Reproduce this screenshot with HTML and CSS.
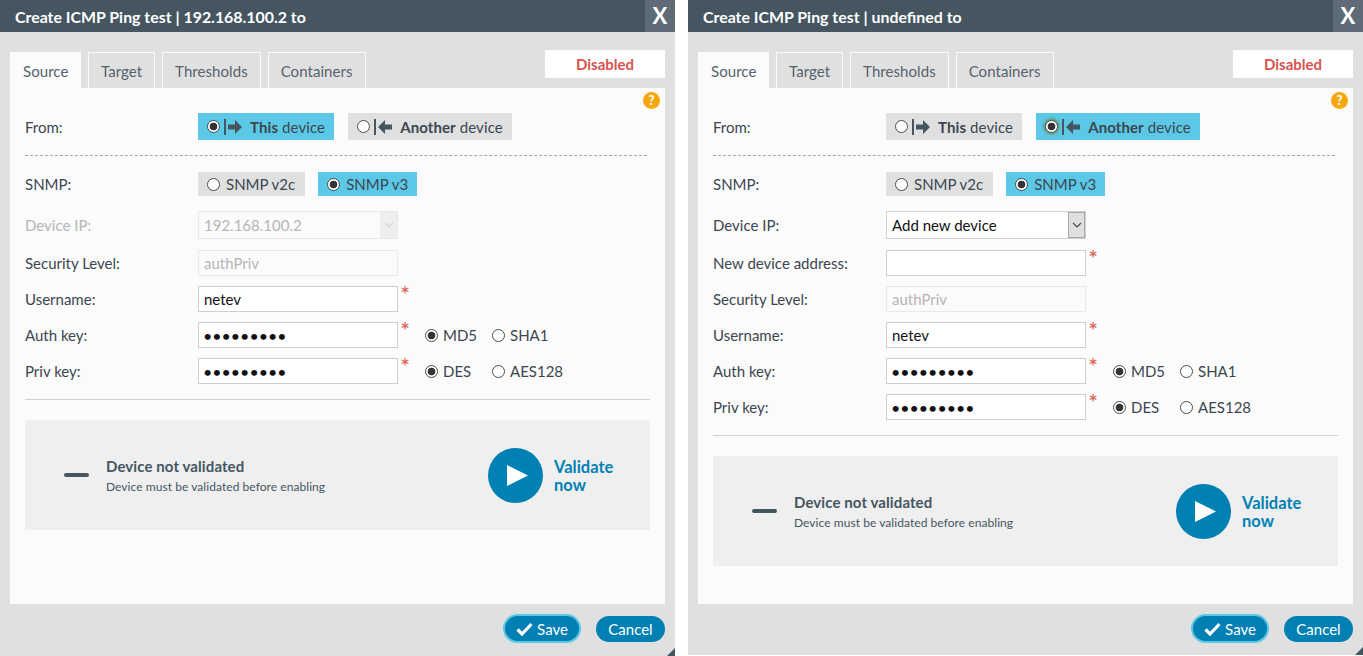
FILE: index.html
```html
<!DOCTYPE html>
<html lang="en">
<head>
<meta charset="utf-8">
<title>Create ICMP Ping test</title>
<link rel="stylesheet" href="styles.css">
</head>
<body>
<div class="desk">

<section class="dialog">
  <header class="title"><span class="title-text">Create ICMP Ping test | 192.168.100.2 to</span><span class="close">X</span></header>
  <div class="tabbar">
    <span class="tab tab-active">Source</span><span class="tab">Target</span><span class="tab">Thresholds</span><span class="tab">Containers</span>
    <span class="state">Disabled</span>
  </div>
  <div class="panel">
    <span class="help">?</span>
    <div class="row row-from">
      <label class="lbl">From:</label>
      <span class="toggle toggle-big on"><input class="radio" type="radio" checked>
        <svg class="dir" width="20" height="16" viewBox="0 0 20 16"><rect x="0" y="0" width="2" height="16" fill="#455661"/><path d="M4 5.500h7V1l7 7-7 7v-4.500H4z" fill="#455661"/></svg>
        <span class="toggle-text"><b>This</b> device</span></span>
      <span class="toggle toggle-big"><input class="radio" type="radio">
        <svg class="dir" width="20" height="16" viewBox="0 0 20 16"><rect x="0" y="0" width="2" height="16" fill="#455661"/><path d="M18 5.500h-7V1L4 8l7 7v-4.500h7z" fill="#455661"/></svg>
        <span class="toggle-text"><b>Another</b> device</span></span>
    </div>
    <div class="dashed"></div>
    <div class="row row-snmp">
      <label class="lbl">SNMP:</label>
      <span class="toggle"><input class="radio" type="radio">SNMP v2c</span>
      <span class="toggle on"><input class="radio" type="radio" checked>SNMP v3</span>
    </div>
    <div class="row row-select">
      <label class="lbl off">Device IP:</label>
      <span class="selectbox selectbox-off"><select class="select" disabled><option>192.168.100.2</option></select><span class="arrow"><svg width="10" height="6" viewBox="0 0 10 6"><path d="M1 1l4 4 4-4" fill="none" stroke="#d5d5d5" stroke-width="1.200"/></svg></span></span>
    </div>
    <div class="row row-field">
      <label class="lbl">Security Level:</label>
      <input class="field" type="text" value="authPriv" disabled>
    </div>
    <div class="row row-field">
      <label class="lbl">Username:</label>
      <input class="field" type="text" value="netev"><span class="star">*</span>
    </div>
    <div class="row row-field">
      <label class="lbl">Auth key:</label>
      <input class="field" type="password" value="xxxxxxxxx"><span class="star">*</span>
      <span class="opt"><input class="radio" type="radio" checked>MD5</span><span class="opt"><input class="radio" type="radio">SHA1</span>
    </div>
    <div class="row row-field">
      <label class="lbl">Priv key:</label>
      <input class="field" type="password" value="xxxxxxxxx"><span class="star">*</span>
      <span class="opt"><input class="radio" type="radio" checked>DES</span><span class="opt"><input class="radio" type="radio">AES128</span>
    </div>
    <div class="rule"></div>
    <div class="validate">
      <span class="dash"></span>
      <div class="vtext"><div class="vtitle">Device not validated</div><div class="vsub">Device must be validated before enabling</div></div>
      <span class="play"><svg width="21" height="21" viewBox="0 0 21 21"><path d="M0 0l21 10.500L0 21z" fill="#fff"/></svg></span>
      <span class="vlink">Validate<br>now</span>
    </div>
  </div>
  <footer class="foot">
    <button class="btn btn-save"><svg width="17" height="14" viewBox="0 0 17 14"><path d="M1.500 7.500l4.500 4.500 9.500-10" fill="none" stroke="#fff" stroke-width="3.200"/></svg>Save</button>
    <button class="btn btn-cancel">Cancel</button>
  </footer>
  <span class="grip"></span>
</section>

<section class="dialog dialog-second">
  <header class="title"><span class="title-text">Create ICMP Ping test | undefined to</span><span class="close">X</span></header>
  <div class="tabbar">
    <span class="tab tab-active">Source</span><span class="tab">Target</span><span class="tab">Thresholds</span><span class="tab">Containers</span>
    <span class="state">Disabled</span>
  </div>
  <div class="panel">
    <span class="help">?</span>
    <div class="row row-from">
      <label class="lbl">From:</label>
      <span class="toggle toggle-big"><input class="radio" type="radio">
        <svg class="dir" width="20" height="16" viewBox="0 0 20 16"><rect x="0" y="0" width="2" height="16" fill="#455661"/><path d="M4 5.500h7V1l7 7-7 7v-4.500H4z" fill="#455661"/></svg>
        <span class="toggle-text"><b>This</b> device</span></span>
      <span class="toggle toggle-big on"><input class="radio radio-focus" type="radio" checked>
        <svg class="dir" width="20" height="16" viewBox="0 0 20 16"><rect x="0" y="0" width="2" height="16" fill="#455661"/><path d="M18 5.500h-7V1L4 8l7 7v-4.500h7z" fill="#455661"/></svg>
        <span class="toggle-text"><b>Another</b> device</span></span>
    </div>
    <div class="dashed"></div>
    <div class="row row-snmp">
      <label class="lbl">SNMP:</label>
      <span class="toggle"><input class="radio" type="radio">SNMP v2c</span>
      <span class="toggle on"><input class="radio" type="radio" checked>SNMP v3</span>
    </div>
    <div class="row row-select">
      <label class="lbl">Device IP:</label>
      <span class="selectbox"><select class="select"><option>Add new device</option></select><span class="arrow"><svg width="10" height="6" viewBox="0 0 10 6"><path d="M1 1l4 4 4-4" fill="none" stroke="#444" stroke-width="1.200"/></svg></span></span>
    </div>
    <div class="row row-field">
      <label class="lbl">New device address:</label>
      <input class="field" type="text"><span class="star">*</span>
    </div>
    <div class="row row-field">
      <label class="lbl">Security Level:</label>
      <input class="field" type="text" value="authPriv" disabled>
    </div>
    <div class="row row-field">
      <label class="lbl">Username:</label>
      <input class="field" type="text" value="netev"><span class="star">*</span>
    </div>
    <div class="row row-field">
      <label class="lbl">Auth key:</label>
      <input class="field" type="password" value="xxxxxxxxx"><span class="star">*</span>
      <span class="opt"><input class="radio" type="radio" checked>MD5</span><span class="opt"><input class="radio" type="radio">SHA1</span>
    </div>
    <div class="row row-field">
      <label class="lbl">Priv key:</label>
      <input class="field" type="password" value="xxxxxxxxx"><span class="star">*</span>
      <span class="opt"><input class="radio" type="radio" checked>DES</span><span class="opt"><input class="radio" type="radio">AES128</span>
    </div>
    <div class="rule"></div>
    <div class="validate">
      <span class="dash"></span>
      <div class="vtext"><div class="vtitle">Device not validated</div><div class="vsub">Device must be validated before enabling</div></div>
      <span class="play"><svg width="21" height="21" viewBox="0 0 21 21"><path d="M0 0l21 10.500L0 21z" fill="#fff"/></svg></span>
      <span class="vlink">Validate<br>now</span>
    </div>
  </div>
  <footer class="foot">
    <button class="btn btn-save"><svg width="17" height="14" viewBox="0 0 17 14"><path d="M1.500 7.500l4.500 4.500 9.500-10" fill="none" stroke="#fff" stroke-width="3.200"/></svg>Save</button>
    <button class="btn btn-cancel">Cancel</button>
  </footer>
  <span class="grip"></span>
</section>

</div>
</body>
</html>
```
FILE: styles.css
```css
* { box-sizing: border-box; }
html, body { margin: 0; background: #fff; }
body { font: 15px/20px Lato, "Open Sans", sans-serif; color: #3b4650; overflow: hidden; }
.desk { display: flex; align-items: flex-start; gap: 13px; width: 1363px; height: 656px; overflow: hidden; }
.dialog { position: relative; width: 675px; height: 656px; flex: none; display: flex; flex-direction: column; background: #e0e0e0; }
.dialog-second { height: 655px; }

.title { height: 32px; flex: none; display: flex; justify-content: space-between; background: #455661; color: #fff; }
.title-text { padding: 7px 0 0 15px; font-weight: 700; font-size: 15.900px; line-height: 20px; }
.close { width: 30px; text-align: center; background: #5f6b77; font-weight: 700; font-size: 22px; line-height: 32px; }

.tabbar { height: 56px; flex: none; margin: 0 10px; display: flex; align-items: flex-end; gap: 7px; }
.tab { height: 36px; padding: 7px 12px 0; border: 1px solid #fbfbfb; border-bottom: 0; color: #56626c; line-height: 22px; letter-spacing: .06px; }
.tab-active { padding-right: 11.500px; background: #fbfbfb; border-color: #fbfbfb; }
.state { align-self: flex-start; margin: 18px 0 0 auto; width: 120px; height: 28px; background: #fff; color: #d9534f; font-weight: 700; text-align: center; line-height: 28px; }

.panel { position: relative; height: 516px; flex: none; margin: 0 10px; padding: 0 15px; background: #fbfbfb; }
.help { position: absolute; top: 4px; right: 5px; width: 17px; height: 17px; border-radius: 50%; background: #f5a70c; color: #fff; font-weight: 900; font-size: 13px; line-height: 17px; text-align: center; }

.row { display: flex; align-items: center; }
.lbl { width: 173px; flex: none; color: #3b4650; }
.lbl.off { color: #b5b5b5; }
.row-from { margin-top: 25px; height: 27px; gap: 0; }
.row-snmp { margin-top: 16px; height: 24px; }
.row-select { margin-top: 15px; height: 28px; }
.row-field { margin-top: 10px; height: 26px; }
.row-select + .row-field { margin-top: 11px; }

.toggle { display: inline-flex; align-items: center; height: 100%; padding: 0 9px; background: #e0e0e0; color: #3b4650; margin-right: 13px; }
.row-snmp .lbl + .toggle { padding-right: 10px; }
.toggle.on { background: #5bc8e5; }
.toggle-big { margin-right: 14px; }
.toggle b { font-weight: 700; }
.dir { margin: 0 0 0 4px; flex: none; }
.toggle-text { margin-left: 6px; letter-spacing: .1px; }

.radio { appearance: none; -webkit-appearance: none; width: 13px; height: 13px; margin: 0 6px 0 0; flex: none; border: 1px solid #4b4b4b; border-radius: 50%; background: #fff; }
.radio:checked { background: radial-gradient(circle, #333 0 3.500px, #fff 4.200px); }
.toggle-big .radio { margin-right: 0; }
.radio-focus { box-shadow: 0 0 3px 1px #6f7a3a; }

.dashed { width: 622px; margin-top: 15px; border-top: 1px dashed #a8a8a8; }
.rule { width: 625px; margin-top: 15px; border-top: 1px solid #cfcfcf; }

.field { width: 200px; height: 100%; flex: none; padding: 0 5px; border: 1px solid #cfcfcf; background: #fff; color: #111; font: 15px Lato, sans-serif; outline: 0; }
.field:disabled { border-color: #e8e8e8; background: #fbfbfb; color: #b5b5b5; }
.field[type=password] { padding-left: 4px; font-size: 16px; }
.star { width: 27px; flex: none; align-self: flex-start; margin-top: -2px; padding-left: 2px; color: #e05a50; font-size: 24px; line-height: 20px; }
.opt { width: 67px; flex: none; display: inline-flex; align-items: center; }
.opt .radio { margin-right: 5px; }

.selectbox { position: relative; width: 200px; height: 100%; flex: none; }
.select { appearance: none; -webkit-appearance: none; display: block; width: 100%; height: 100%; padding: 0 5px; border: 1px solid #cfcfcf; border-radius: 0; background: #fff; color: #111; font: 15px Lato, sans-serif; }
.selectbox-off .select { border-color: #e8e8e8; background: #fbfbfb; color: #b5b5b5; opacity: 1; }
.arrow { position: absolute; top: 1px; right: 1px; bottom: 1px; width: 17px; display: flex; align-items: center; justify-content: center; background: #dfdfdf; border: 1px solid #a8a8a8; }
.selectbox-off .arrow { background: #eeeeee; border-color: #eeeeee; }

.validate { width: 625px; height: 110px; margin-top: 20px; display: flex; align-items: center; background: #efefef; }
.dash { width: 25px; height: 4px; margin-left: 39px; border-radius: 2px; background: #455661; flex: none; }
.vtext { width: 382px; margin-left: 17px; flex: none; }
.vtitle { font-weight: 700; font-size: 15px; line-height: 20px; color: #455661; letter-spacing: .1px; }
.vsub { margin-top: 3px; font-size: 12px; line-height: 16px; color: #455661; letter-spacing: .06px; }
.play { width: 55px; height: 55px; flex: none; display: flex; align-items: center; justify-content: center; padding-left: 4px; border-radius: 50%; background: #0080b3; }
.vlink { margin-left: 11px; padding-top: 2px; font-weight: 700; font-size: 16.500px; line-height: 18px; color: #0080b3; }

.foot { flex: none; height: 51px; display: flex; align-items: center; justify-content: flex-end; gap: 15px; padding: 0 10px 2px 0; }
.btn { display: inline-flex; align-items: center; justify-content: center; border: 0; padding: 0; border-radius: 15px; background: #0080b3; color: #fff; font: 15px/20px Lato, sans-serif; }
.btn-save { width: 78px; height: 29px; gap: 4px; border: 2px solid #5bc8e5; }
.btn-cancel { width: 69px; height: 26px; }

.grip { position: absolute; right: 0; bottom: 0; width: 0; height: 0; border-style: solid; border-width: 0 0 8px 8px; border-color: transparent transparent #455661 transparent; }
```
